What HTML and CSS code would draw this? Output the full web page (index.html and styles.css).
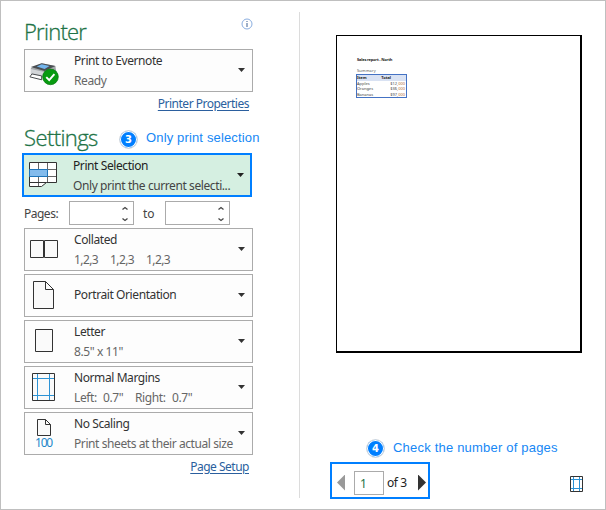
FILE: index.html
```html
<!DOCTYPE html>
<html lang="en">
<head>
<meta charset="utf-8">
<title>Print</title>
<link rel="stylesheet" href="styles.css">
</head>
<body>
<main class="window">
  <section class="options">
    <header class="heading">
      <h1>Printer</h1>
      <svg class="info" width="12" height="12" viewBox="0 0 12 12"><circle cx="6" cy="6" r="5" fill="#fff" stroke="#8aaee0"/><path d="M5.5 3h1v1h-1zM5.5 5h1v4h-1z" fill="#3d6193"/></svg>
    </header>
    <div class="picker">
      <svg class="icon" width="50" height="41" viewBox="0 0 50 41">
        <path d="M6 18l11-5 14 3 1 6-12 6-14-4z" fill="#a3a7aa"/>
        <path d="M6 17l11-4 14 3-11 5z" fill="#4a4e52"/>
        <path d="M12 16.500l5-2.500 8 2-5 3z" fill="#73b5ec"/>
        <path d="M6 19l14 3v6L6 24z" fill="#d2d5d8"/>
        <path d="M7 24l10 2v4L5 27z" fill="#fff" stroke="#44484b"/>
        <circle cx="26" cy="27" r="8" fill="#079b10" stroke="#087610" stroke-width=".7"/>
        <path d="M21.700 27.300l3 3 5.300-6" fill="none" stroke="#fff" stroke-width="2"/>
      </svg>
      <div class="label"><b>Print to Evernote</b><span>Ready</span></div>
      <i class="caret"></i>
    </div>
    <a class="link link-printer">Printer Properties</a>
    <div class="heading settings">
      <h1>Settings</h1>
      <span class="step">3</span><span class="note">Only print selection</span>
    </div>
    <div class="picker selected">
      <svg class="icon" width="49" height="40" viewBox="0 0 49 40">
        <path d="M5.500 7.500h27v20h-10l-5 4h-12z" fill="#fff"/>
        <path d="M14.500 7v24M23.500 7v20M5 14.500h28M5 21.500h28" stroke="#666" fill="none"/>
        <path d="M5.500 7.500h27v20h-10l-5 4h-12zM5.500 27.500h17" fill="none" stroke="#333"/>
        <path d="M5.500 14.500h18v7h-18z" fill="#83bbec" stroke="#1e74b9"/>
      </svg>
      <div class="label"><b>Print Selection</b><span>Only print the current selecti...</span></div>
      <i class="caret"></i>
    </div>
    <div class="pages">
      <span class="pages-label">Pages:</span>
      <span class="spin"><svg width="8" height="16" viewBox="0 0 8 16"><path d="M1.500 3.500L4 1.500 6.500 3.500M1.500 12.500L4 14.500 6.500 12.500"/></svg></span>
      <span class="to">to</span>
      <span class="spin"><svg width="8" height="16" viewBox="0 0 8 16"><path d="M1.500 3.500L4 1.500 6.500 3.500M1.500 12.500L4 14.500 6.500 12.500"/></svg></span>
    </div>
    <div class="stack">
      <div class="picker">
        <svg class="icon" width="49" height="41" viewBox="0 0 49 41"><path d="M5.500 11.500h13v17h-13zM19.500 11.500h13v17h-13z" fill="#fafafa" stroke="#333"/></svg>
        <div class="label"><b>Collated</b><span class="sets"><span>1,2,3</span><span>1,2,3</span><span>1,2,3</span></span></div>
        <i class="caret"></i>
      </div>
      <div class="picker">
        <svg class="icon" width="49" height="41" viewBox="0 0 49 41"><path d="M8.500 6.500h12l8 8v19h-20zM20.500 6.500v8h8" fill="#fafafa" stroke="#333"/></svg>
        <div class="label single"><b>Portrait Orientation</b></div>
        <i class="caret"></i>
      </div>
      <div class="picker">
        <svg class="icon" width="49" height="41" viewBox="0 0 49 41"><path d="M10.500 8.500h17v22h-17z" fill="#fafafa" stroke="#333"/></svg>
        <div class="label"><b>Letter</b><span>8.5" x 11"</span></div>
        <i class="caret"></i>
      </div>
      <div class="picker">
        <svg class="icon" width="49" height="41" viewBox="0 0 49 41"><path d="M7.500 6.500h22v27h-22z" fill="#fafafa" stroke="#333"/><path d="M12.500 7v26M24.500 7v26M8 11.500h21M8 28.500h21" stroke="#2d93d5"/></svg>
        <div class="label"><b>Normal Margins</b><span class="margins"><span>Left:</span><span>0.7"</span><span>Right:</span><span>0.7"</span></span></div>
        <i class="caret"></i>
      </div>
      <div class="picker">
        <div class="icon scaling">
          <svg width="16" height="19" viewBox="0 0 16 19"><path d="M1.500 1.500h8l5 5v11h-13zM9.500 1.500v5h5" fill="#fafafa" stroke="#333"/></svg>
          <span>100</span>
        </div>
        <div class="label"><b>No Scaling</b><span>Print sheets at their actual size</span></div>
        <i class="caret"></i>
      </div>
    </div>
    <a class="link link-page">Page Setup</a>
  </section>
  <section class="preview">
    <div class="sheet">
      <p class="report">Sales report - North</p>
      <p class="summary">Summary</p>
      <div class="table">
        <div class="row head"><span>Item</span><span>Total</span></div>
        <div class="row"><span>Apples</span><span>$12<em>,000</em></span></div>
        <div class="row"><span>Oranges</span><span>$36<em>,000</em></span></div>
        <div class="row"><span>Bananas</span><span>$97<em>,000</em></span></div>
      </div>
    </div>
    <div class="hint"><span class="step">4</span><span class="note">Check the number of pages</span></div>
    <footer>
      <div class="pager">
        <i class="prev"></i><span class="number">1</span><span class="count">of 3</span><i class="next"></i>
      </div>
      <svg width="13" height="16" viewBox="0 0 13 16"><path d="M3.500 1v14M9.500 1v14M1 3.500h11M1 12.500h11" stroke="#2d93d5"/><path d="M.5.5h12v15H.5z" fill="none" stroke="#333"/></svg>
    </footer>
  </section>
</main>
</body>
</html>
```
FILE: styles.css
```css
* { box-sizing: border-box; }
body { margin: 0; background: #fff; font: 12px/20px "Noto Sans", "Open Sans", sans-serif; color: #444; }
.window { width: 606px; height: 510px; border: 1px solid #bfbfbf; display: flex; }
.options { width: 298px; padding: 16px 0 0 23px; }
.heading { display: flex; width: 229px; height: 32px; align-items: flex-start; }
h1 { margin: 0; font: 300 22px/29px "Open Sans", "Noto Sans", sans-serif; color: #217346; letter-spacing: -.75px; -webkit-text-stroke: .3px #217346; }
.info { margin: 1px 0 0 auto; }
.picker { width: 229px; height: 43px; border: 1px solid #ababab; background: #fdfdfd; display: flex; position: relative; }
.icon { width: 49px; flex: none; }
.label { display: flex; flex-direction: column; justify-content: center; height: 42px; white-space: nowrap; color: #666; letter-spacing: -.41px; }
.label b { font-weight: 400; color: #333; }
.single { height: 39px; }
.caret { position: absolute; right: 7px; top: 18px; width: 7px; height: 4px; background: #333; clip-path: polygon(0 0, 100% 0, 50% 100%); }
.link { display: block; width: max-content; color: #2b5f9e; text-decoration: underline; text-underline-offset: 2px; line-height: 20px; white-space: nowrap; letter-spacing: -.5px; }
.link-printer { margin: 2px 50px 0 auto; }
.settings { margin-top: 8px; height: 31px; }
.settings h1 { margin-top: 1px; letter-spacing: -.6px; }
.step { width: 19px; height: 19px; flex: none; border-radius: 50%; border: 1px solid #dedede; background: #007fff; box-shadow: inset 0 0 0 1px #fff; color: #fff; font: bold 10px/17px "DejaVu Sans", sans-serif; text-align: center; }
.note { font: 13px/20px "Liberation Sans", sans-serif; color: #1687f5; white-space: nowrap; letter-spacing: .15px; }
.settings .step { margin: 8px 0 0 auto; }
.settings .note { width: 115px; margin: 6px -8px 0 8px; }
.selected { width: 230px; height: 44px; margin-left: -2px; border: 2px solid #007fff; background: #d5efe1; }
.selected .label { color: #444; }
.selected .label b { color: #222; }
.selected .caret { right: 6px; background: #222; }
.pages { display: flex; height: 24px; margin-top: 4px; align-items: center; }
.pages-label, .to { padding-top: 2px; }
.pages-label { width: 45px; letter-spacing: -.5px; }
.spin { width: 65px; height: 24px; border: 1px solid #ababab; display: flex; justify-content: flex-end; padding: 4px 4px 0 0; }
.spin path { fill: none; stroke: #444; stroke-width: 1.300; }
.to { width: 31px; padding-left: 9px; }
.stack { display: flex; flex-direction: column; gap: 3px; margin-top: 3px; }
.sets { display: flex; gap: 11px; }
.sets span { width: 25px; letter-spacing: -.6px; }
.margins { display: flex; }
.margins span:nth-child(1) { width: 29px; }
.margins span:nth-child(2) { width: 32px; }
.margins span:nth-child(3) { width: 37px; }
.scaling { display: flex; flex-direction: column; padding: 5px 0 0 10px; }
.scaling svg { display: block; flex: none; margin-left: 1px; }
.scaling span { color: #1e88c9; font-size: 12px; line-height: 11px; letter-spacing: -1.200px; }
.link-page { margin: 2px 50px 0 auto; }
.preview { width: 306px; height: 486px; margin-top: 11px; border-left: 1px solid #dcdcdc; padding: 23px 0 0 36px; }
.sheet { width: 246px; height: 318px; border: solid #000; border-width: 1px 2px 2px 1px; padding: 21px 0 0 19px; font-size: 4px; line-height: 6px; }
.sheet p { margin: 0; height: 6px; padding-left: 1px; color: #555; white-space: nowrap; }
.sheet .report { font-weight: 700; color: #222; letter-spacing: -.2px; }
.sheet .summary { margin-top: 5px; letter-spacing: .1px; }
.table { width: 51px; height: 24px; border: 1px solid #4472c4; }
.row { display: flex; justify-content: space-between; height: 5.500px; line-height: 5.500px; padding-right: 1px; }
.row em { font-style: normal; color: #b66b32; }
.head { background: #d9e2f3; font-weight: 700; color: #222; padding-right: 15px; }
.hint { display: flex; margin: 85px 0 0 30px; height: 24px; }
.hint .step { margin-top: 1px; }
.hint .note { margin-left: 8px; letter-spacing: .2px; }
footer { display: flex; width: 253px; margin-left: -6px; align-items: flex-start; justify-content: space-between; }
footer > svg { margin-top: 14px; }
.pager { width: 100px; height: 37px; border: 2px solid #007fff; display: flex; align-items: center; color: #222; }
.prev, .next { width: 8px; height: 16px; flex: none; margin-top: 4px; }
.prev { margin-left: 5px; background: #999; clip-path: polygon(100% 0, 100% 100%, 0 50%); }
.next { margin-left: auto; margin-right: 2px; background: #333; clip-path: polygon(0 0, 100% 50%, 0 100%); }
.number { width: 30px; height: 24px; margin: 4px 0 0 9px; padding-left: 5px; border: 1px solid #ababab; line-height: 23px; color: #217346; }
.count { margin: 5px 0 0 3px; letter-spacing: -.4px; }
```
